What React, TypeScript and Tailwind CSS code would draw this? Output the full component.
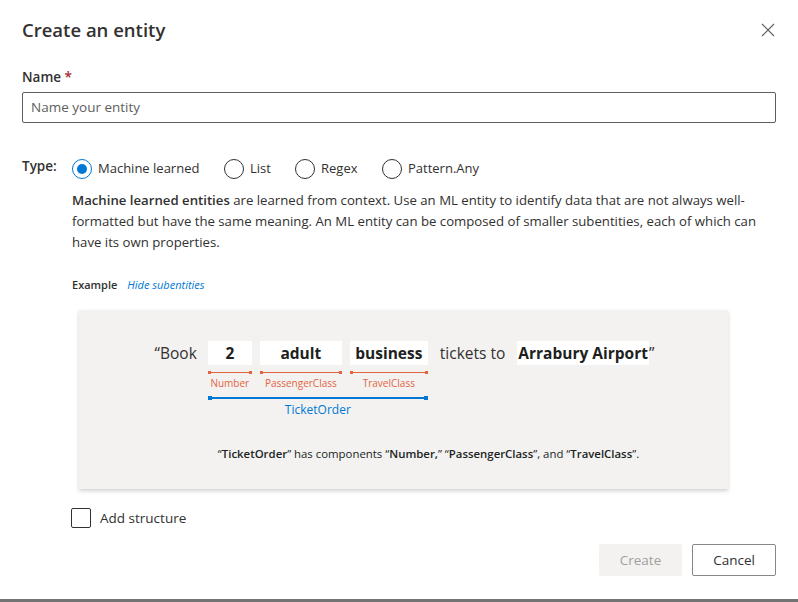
import React from 'react';

const font = { fontFamily: '"Open Sans", "Noto Sans", Arial, sans-serif' };

const Radio = ({ label, checked, width }: { label: string; checked?: boolean; width: string }) => (
  <label className={`flex items-center gap-[6px] text-[13px] text-[#323130] ${width}`}>
    <span
      className={`w-[20px] h-[20px] rounded-full border flex items-center justify-center bg-white ${
        checked ? 'border-[#0078d4]' : 'border-[#323130]'
      }`}
    >
      {checked && <span className="w-[10px] h-[10px] rounded-full bg-[#0078d4]" />}
    </span>
    <span>{label}</span>
  </label>
);

const Entity = ({ word, label, width }: { word: string; label: string; width: string }) => (
  <div className={`flex flex-col items-stretch ${width}`}>
    <div className="h-[24px] bg-white flex items-center justify-center text-[15.5px] font-bold text-[#201f1e]">
      {word}
    </div>
    <div className="mt-[6px] h-[3px] flex items-center">
      <span className="w-[3px] h-[3px] bg-[#e3633f]" />
      <span className="flex-1 h-px bg-[#e3633f]" />
      <span className="w-[3px] h-[3px] bg-[#e3633f]" />
    </div>
    <div className="mt-[2px] text-[10px] leading-[14px] text-[#e3633f] text-center">{label}</div>
  </div>
);

export default function App() {
  return (
    <div className="w-[798px] h-[602px] bg-white flex flex-col text-[#323130]" style={font}>
      <div className="flex-1 flex flex-col px-[22px]">
        {/* Header */}
        <div className="flex items-center justify-between h-[60px] pb-[1px]">
          <h1 className="text-[18.5px] font-semibold text-[#323130]">Create an entity</h1>
          <svg width="14" height="14" viewBox="0 0 14 14" className="mr-[1px]">
            <path d="M1 1 L13 13 M13 1 L1 13" stroke="#605e5c" strokeWidth="1.1" />
          </svg>
        </div>

        {/* Name */}
        <div className="mt-[7px] text-[13.5px] font-semibold leading-[20px]">
          Name <span className="text-[#a4262c]">*</span>
        </div>
        <div className="mt-[5px] h-[31px] border border-[#605e5c] rounded-[2px] flex items-center px-[8px] text-[13.5px] text-[#605e5c]">
          Name your entity
        </div>

        {/* Type */}
        <div className="mt-[36px] flex">
          <div className="w-[50px] text-[13.5px] font-semibold leading-[20px] -mt-[3px]">Type:</div>
          <div className="flex-1 flex flex-col">
            <div className="flex items-center">
              <Radio label="Machine learned" checked width="w-[152px]" />
              <Radio label="List" width="w-[71px]" />
              <Radio label="Regex" width="w-[87px]" />
              <Radio label="Pattern.Any" width="w-[120px]" />
            </div>
            <p className="mt-[11px] text-[13.2px] leading-[21px] pr-[10px]">
              <span className="font-semibold">Machine learned entities</span> are learned from context. Use an ML
              entity to identify data that are not always well-formatted but have the same meaning. An ML entity
              can be composed of smaller subentities, each of which can have its own properties.
            </p>

            <div className="mt-[24px] flex items-center gap-[10px] text-[11px]">
              <span className="font-semibold">Example</span>
              <span className="italic text-[#0078d4]">Hide subentities</span>
            </div>

            {/* Example card */}
            <div className="mt-[16px] ml-[7px] w-[649px] h-[179px] bg-[#f3f2f1] shadow-[0_1.6px_4px_rgba(0,0,0,0.18)] flex flex-col items-center pt-[31px]">
              <div className="flex items-start text-[15.5px] leading-[24px] ml-[2px]">
                <span className="mr-[11px]">“Book</span>
                <div className="flex flex-col">
                  <div className="flex gap-[8px]">
                    <Entity word="2" label="Number" width="w-[44px]" />
                    <Entity word="adult" label="PassengerClass" width="w-[82px]" />
                    <Entity word="business" label="TravelClass" width="w-[78px]" />
                  </div>
                  <div className="mt-[6px] h-[4px] flex items-center">
                    <span className="w-[4px] h-[4px] bg-[#0078d4]" />
                    <span className="flex-1 h-[2px] bg-[#0078d4]" />
                    <span className="w-[4px] h-[4px] bg-[#0078d4]" />
                  </div>
                  <div className="mt-[2px] text-center text-[12px] leading-[16px] text-[#0078d4]">TicketOrder</div>
                </div>
                <span className="ml-[12px] mr-[12px]">tickets to</span>
                <span className="bg-white px-[1px] font-bold text-[#201f1e]">Arrabury Airport</span>
                <span>”</span>
              </div>
              <div className="mt-[28px] pl-[50px] text-[11.4px] leading-[16px] text-[#201f1e]">
                “<span className="font-semibold">TicketOrder</span>” has components “<span className="font-semibold">Number,</span>” “<span className="font-semibold">PassengerClass</span>”, and “<span className="font-semibold">TravelClass</span>”.
              </div>
            </div>
          </div>
        </div>

        {/* Add structure */}
        <div className="mt-[19px] ml-[49px] flex items-center gap-[9px]">
          <span className="w-[20px] h-[20px] border border-[#323130] rounded-[2px] bg-white" />
          <span className="text-[13.5px]">Add structure</span>
        </div>

        {/* Buttons */}
        <div className="mt-[16px] flex justify-end gap-[10px]">
          <button className="w-[83px] h-[32px] rounded-[2px] bg-[#f3f2f1] text-[13.5px] text-[#a19f9d]">Create</button>
          <button className="w-[84px] h-[32px] rounded-[2px] border border-[#8a8886] bg-white text-[13.5px] text-[#323130]">
            Cancel
          </button>
        </div>
      </div>
      <div className="h-[3px] bg-[#737373]" />
    </div>
  );
}
